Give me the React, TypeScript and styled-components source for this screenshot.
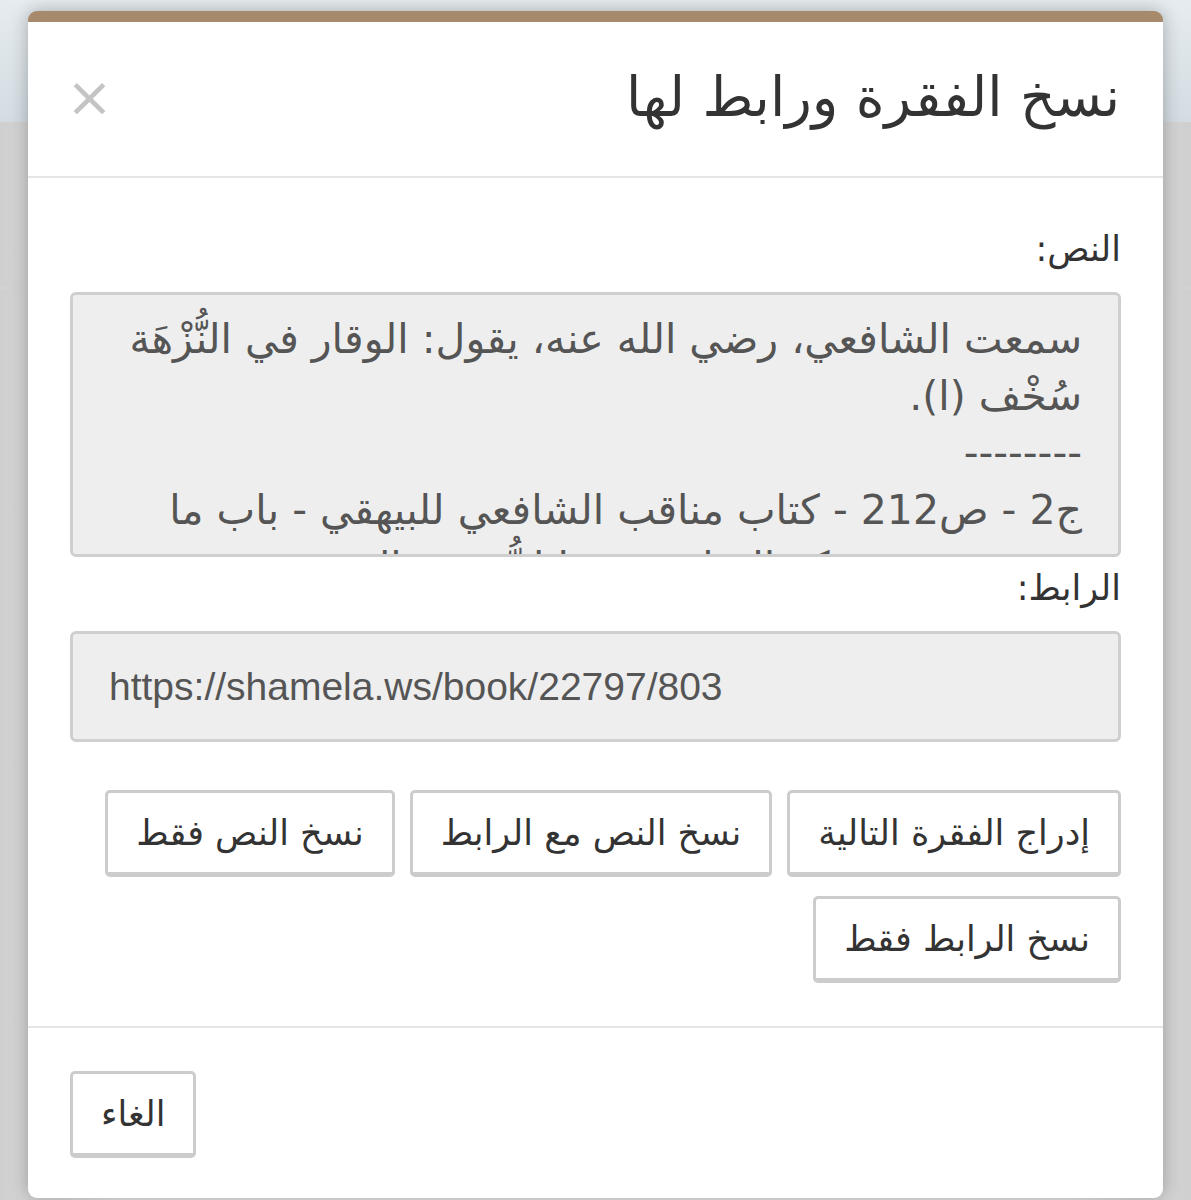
import React from 'react'
import styled, { createGlobalStyle } from 'styled-components'

const GlobalStyle = createGlobalStyle`
	html, body {
		margin: 0;
		padding: 0;
		height: 1200px;
		overflow: hidden;
		background: #dcdcdc;
	}
	#root {
		height: 1200px;
	}
`

const Page = styled.div`
	position: relative;
	height: 1200px;
	display: flex;
	flex-direction: column;
	background: linear-gradient(to right, #cfcfcf, #e6e6e6 10%, #e6e6e6 90%, #cfcfcf);
`

const TopBar = styled.div`
	height: 122px;
	background: linear-gradient(to bottom, #e6ecef, #d3dce2);
`

const SubBar = styled.div`
	height: 164px;
	border-bottom: 4px solid #d2d2d2;
`

const Modal = styled.div`
	position: absolute;
	left: 28px;
	top: 11px;
	width: 1135px;
	height: 1187px;
	box-sizing: border-box;
	background: #fff;
	border-top: 11px solid #a78a6c;
	border-radius: 9px;
	box-shadow: 0 0 18px rgba(0, 0, 0, 0.28);
	direction: rtl;
	font-family: "DejaVu Sans", "Noto Sans", sans-serif;
	color: #333;
	display: flex;
	flex-direction: column;
`

const Header = styled.div`
	flex-shrink: 0;
	border-bottom: 2px solid #e5e5e5;
	display: flex;
	align-items: center;
	justify-content: space-between;
	padding: 0 43px 4px 38px;
	height: 150px;
`

const Title = styled.h1`
	margin: 0;
	font-size: 55px;
	font-weight: normal;
	color: #333;
`

const Close = styled.button`
	border: none;
	background: none;
	padding: 0;
	color: #c4c4c4;
	font-family: "DejaVu Sans", sans-serif;
	font-size: 56px;
	line-height: 1;
	cursor: pointer;
`

const Body = styled.div`
	padding: 44px 42px 0 42px;
	display: flex;
	flex-direction: column;
`

const Label = styled.div`
	font-size: 35px;
	color: #333;
	height: 54px;
	line-height: 54px;
	margin-bottom: 16px;
`

const Field = styled.div<{ $height: number; $ltr?: boolean }>`
	height: ${p => p.$height}px;
	flex-shrink: 0;
	box-sizing: border-box;
	background: #eeeeee;
	border: 3px solid #cfcfcf;
	border-radius: 6px;
	overflow: hidden;
	color: #555;
	font-size: ${p => p.$ltr ? 39 : 41}px;
	padding: ${p => p.$ltr ? '0 36px' : '16px 36px 0 36px'};
	direction: ${p => p.$ltr ? 'ltr' : 'rtl'};
	font-family: ${p => p.$ltr ? '"Liberation Sans", Arial, sans-serif' : '"DejaVu Sans", sans-serif'};
	display: ${p => p.$ltr ? 'flex' : 'block'};
	align-items: center;
	line-height: 57px;
	margin-bottom: 4px;
`

const Buttons = styled.div`
	display: flex;
	flex-wrap: wrap;
	gap: 19px 15px;
	margin-top: 44px;
`

const Btn = styled.button`
	height: 87px;
	box-sizing: border-box;
	background: #fff;
	border: 3px solid #cccccc;
	border-bottom-width: 5px;
	border-radius: 5px;
	padding: 0 28px;
	font-family: "DejaVu Sans", sans-serif;
	font-size: 35px;
	color: #333;
	cursor: pointer;
`

const Footer = styled.div`
	margin-top: 43px;
	border-top: 2px solid #e5e5e5;
	padding: 43px 42px;
	display: flex;
	justify-content: flex-end;
`

export default function App() {
	return (
		<>
			<GlobalStyle />
			<Page>
				<TopBar />
				<SubBar />
				<Modal>
					<Header>
						<Title>نسخ الفقرة ورابط لها</Title>
						<Close>×</Close>
					</Header>
					<Body>
						<Label>النص:</Label>
						<Field $height={265}>
							سمعت الشافعي، رضي الله عنه، يقول: الوقار في النُّزْهَة سُخْف (ا).
							<br />
							--------
							<br />
							ج2 - ص212 - كتاب مناقب الشافعي للبيهقي - باب ما يؤثر عنه في تركه الشافعي مما انتُّهي فقال
						</Field>
						<Label>الرابط:</Label>
						<Field $height={111} $ltr>https://shamela.ws/book/22797/803</Field>
						<Buttons>
							<Btn>إدراج الفقرة التالية</Btn>
							<Btn>نسخ النص مع الرابط</Btn>
							<Btn>نسخ النص فقط</Btn>
							<Btn>نسخ الرابط فقط</Btn>
						</Buttons>
					</Body>
					<Footer>
						<Btn>الغاء</Btn>
					</Footer>
				</Modal>
			</Page>
		</>
	)
}
